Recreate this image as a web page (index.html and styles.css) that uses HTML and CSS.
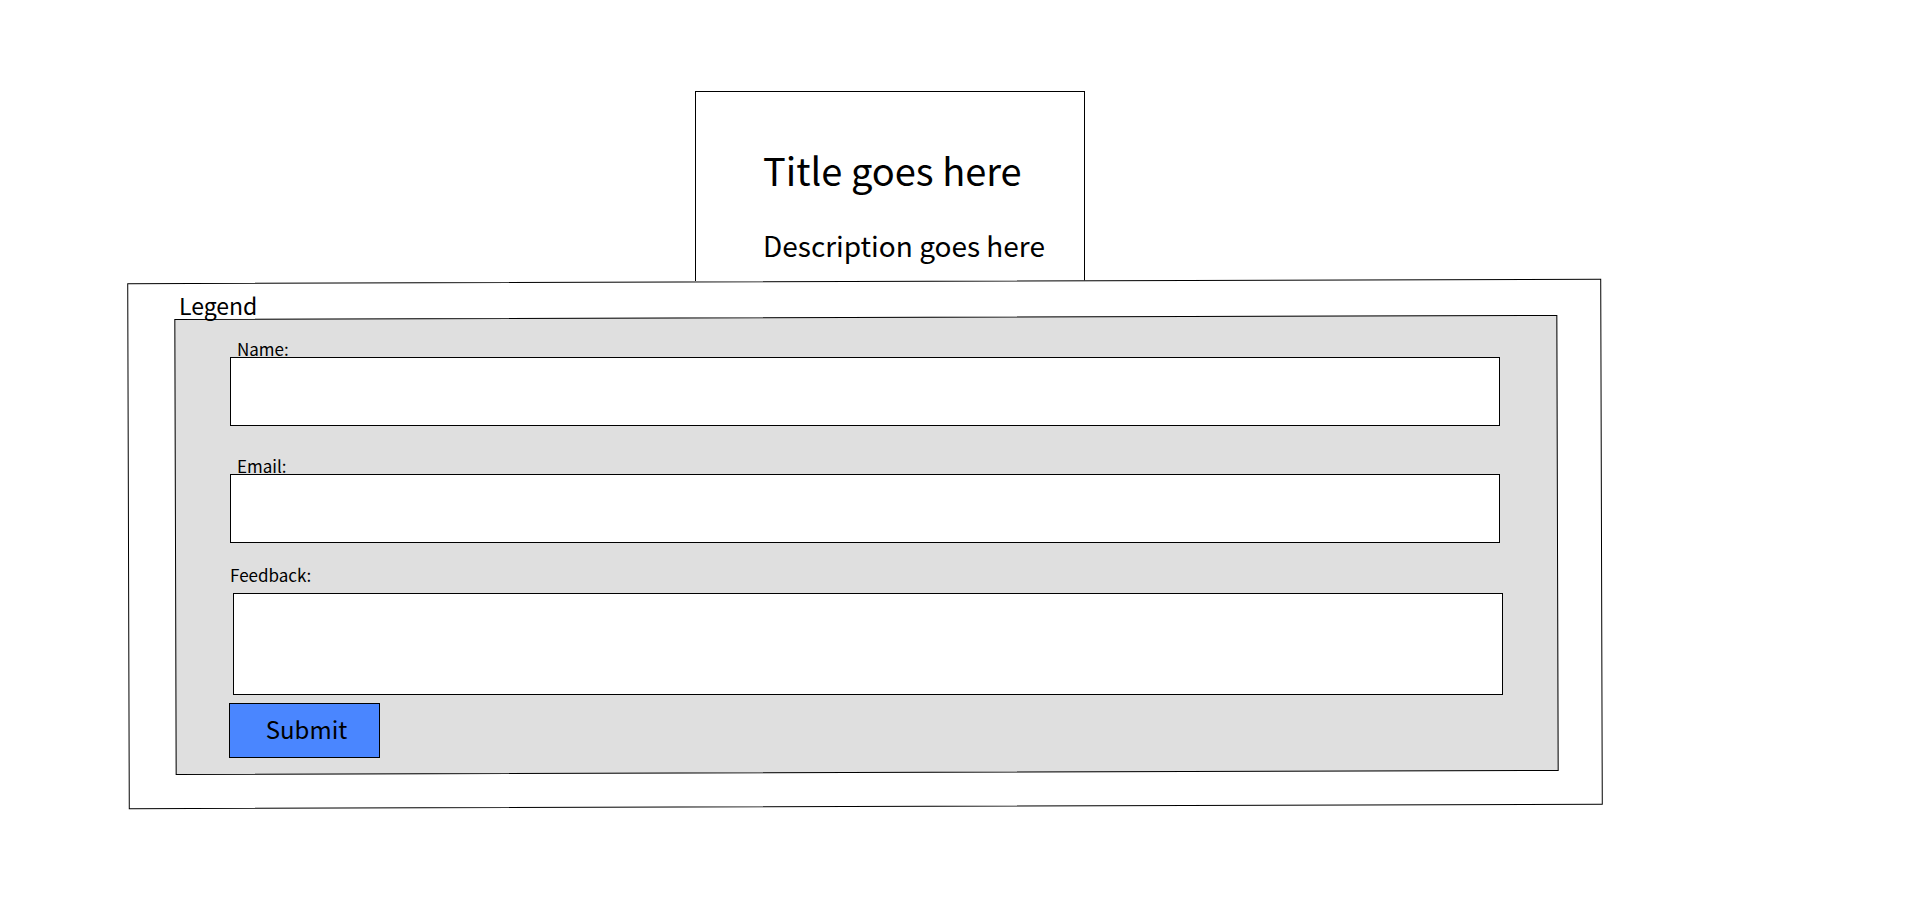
FILE: index.html
```html
<!DOCTYPE html>
<html lang="en">
<head>
  <meta charset="utf-8">
  <title>Feedback form</title>
  <link rel="stylesheet" href="styles.css">
</head>
<body>
  <main class="page">
    <header class="intro">
      <h1 class="intro-title">Title goes here</h1>
      <p class="intro-text">Description goes here</p>
    </header>
    <form class="panel">
      <fieldset class="group">
        <legend class="group-legend">Legend</legend>
        <div class="fields">
          <div class="field">
            <label class="label" for="name">Name:</label>
            <input class="control" id="name" name="name" type="text">
          </div>
          <div class="field field-email">
            <label class="label" for="email">Email:</label>
            <input class="control" id="email" name="email" type="email">
          </div>
          <div class="field field-feedback">
            <label class="label" for="feedback">Feedback:</label>
            <textarea class="control control-tall" id="feedback" name="feedback"></textarea>
          </div>
          <button class="submit" type="submit">Submit</button>
        </div>
      </fieldset>
    </form>
  </main>
</body>
</html>
```

FILE: styles.css
```css
* {
  box-sizing: border-box;
}

body {
  margin: 0;
  background: #fff;
  color: #000;
  font-family: "Noto Sans CJK SC", "Noto Sans", sans-serif;
}

.page {
  display: flex;
  flex-direction: column;
  padding: 91px 318px 112px 128px;
}

.intro {
  align-self: center;
  width: 390px;
  margin-left: 50px;
  padding: 54px 0 18px 67px;
  border: 1px solid #000;
  border-bottom: 0;
}

.intro-title {
  margin: 0 0 33px;
  font-size: 38px;
  font-weight: 400;
  line-height: 48px;
}

.intro-text {
  margin: 0;
  font-size: 28px;
  line-height: 36px;
}

/* The outlines of both panels are tilted slightly; their contents stay level. */
.panel,
.fields {
  position: relative;
  isolation: isolate;
}

.panel::before,
.fields::before {
  content: "";
  position: absolute;
  inset: 0;
  z-index: -1;
  border: 1px solid #000;
  background: #fff;
  transform: rotate(-0.17deg);
}

.fields::before {
  background: #dfdfdf;
}

.panel {
  padding: 12px 44px 34px 47px;
}

.group {
  min-width: 0;
  margin: 0;
  padding: 0;
  border: 0;
}

.group-legend {
  position: relative;
  z-index: 1;
  padding: 0 4px;
  font-size: 23px;
  line-height: 24px;
}

.fields {
  display: flex;
  flex-direction: column;
  padding: 24px 55px 15px 54px;
}

.field {
  display: flex;
  flex-direction: column;
  margin-bottom: 32px;
  padding: 0 3px 0 1px;
}

.field-email {
  margin-bottom: 24px;
}

.field-feedback {
  gap: 10px;
  margin-bottom: 8px;
  padding: 0 0 0 4px;
}

.label {
  padding-left: 7px;
  font-size: 17px;
  line-height: 16px;
}

.field-feedback .label {
  margin-left: -4px;
  padding-left: 1px;
}

.control {
  display: block;
  width: 100%;
  height: 69px;
  padding: 8px 12px;
  border: 1px solid #000;
  border-radius: 0;
  background: #fff;
  font: inherit;
  font-size: 17px;
}

.control-tall {
  height: 102px;
  resize: none;
}

.submit {
  align-self: flex-start;
  width: 151px;
  height: 55px;
  padding: 0 0 4px 4px;
  border: 1px solid #000;
  background: #4a86ff;
  color: #000;
  font: inherit;
  font-size: 24px;
}
```
